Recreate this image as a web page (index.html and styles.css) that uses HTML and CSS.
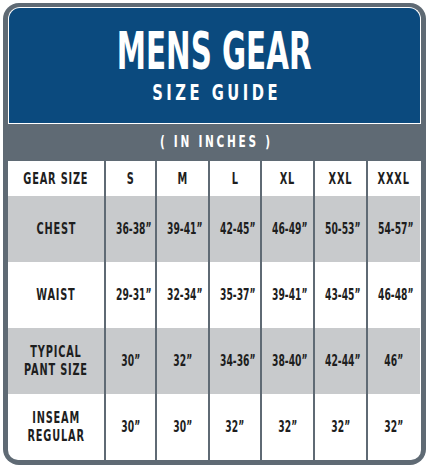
FILE: index.html
```html
<!DOCTYPE html>
<html lang="en">
<head>
    <meta charset="UTF-8">
    <meta name="viewport" content="width=device-width, initial-scale=1.0">
    <title>Mens Gear Size Guide</title>
    <link rel="stylesheet" href="styles.css">
</head>
<body>
    <div class="chart">
        <div class="banner">
            <h1><span>MENS GEAR</span></h1>
            <h2><span>SIZE GUIDE</span></h2>
        </div>

        <p class="unit"><span>( IN INCHES )</span></p>

        <div class="table-wrap">
            <table class="sizes">
                <colgroup>
                    <col class="col-label">
                    <col class="col-s">
                    <col class="col-m">
                    <col class="col-l">
                    <col class="col-m">
                    <col class="col-m">
                    <col class="col-m">
                </colgroup>
                <thead>
                    <tr>
                        <th><span>GEAR SIZE</span></th>
                        <th><span>S</span></th>
                        <th><span>M</span></th>
                        <th><span>L</span></th>
                        <th><span>XL</span></th>
                        <th><span>XXL</span></th>
                        <th><span>XXXL</span></th>
                    </tr>
                </thead>
                <tbody>
                    <tr class="shade">
                        <th><span>CHEST</span></th>
                        <td><span>36-38”</span></td>
                        <td><span>39-41”</span></td>
                        <td><span>42-45”</span></td>
                        <td><span>46-49”</span></td>
                        <td><span>50-53”</span></td>
                        <td><span>54-57”</span></td>
                    </tr>
                    <tr>
                        <th><span>WAIST</span></th>
                        <td><span>29-31”</span></td>
                        <td><span>32-34”</span></td>
                        <td><span>35-37”</span></td>
                        <td><span>39-41”</span></td>
                        <td><span>43-45”</span></td>
                        <td><span>46-48”</span></td>
                    </tr>
                    <tr class="shade">
                        <th><span>TYPICAL<br>PANT SIZE</span></th>
                        <td><span>30”</span></td>
                        <td><span>32”</span></td>
                        <td><span>34-36”</span></td>
                        <td><span>38-40”</span></td>
                        <td><span>42-44”</span></td>
                        <td><span>46”</span></td>
                    </tr>
                    <tr>
                        <th><span>INSEAM<br>REGULAR</span></th>
                        <td><span>30”</span></td>
                        <td><span>30”</span></td>
                        <td><span>32”</span></td>
                        <td><span>32”</span></td>
                        <td><span>32”</span></td>
                        <td><span>32”</span></td>
                    </tr>
                </tbody>
            </table>
        </div>
    </div>
</body>
</html>
```

FILE: styles.css
```css
body {
    margin: 0;
    padding: 0;
    background: #fff;
    font-family: 'DejaVu Sans Condensed', 'DejaVu Sans', sans-serif;
    font-weight: bold;
}
.chart {
    box-sizing: border-box;
    width: 423px;
    height: 462px;
    margin: 3px 0 0 3px;
    padding: 4px 5px 5px 5px;
    background: #5f6a74;
    border-radius: 16px;
}
.banner {
    box-sizing: border-box;
    height: 116px;
    padding-top: 19px;
    background: #0b4a7e;
    border: 1.5px solid #fff;
    border-bottom: none;
    border-radius: 12px 12px 0 0;
    color: #fff;
    text-align: center;
}
.banner span, .unit span, .sizes span {
    display: inline-block;
    white-space: nowrap;
}
.banner h1 {
    margin: 0;
    font-size: 51px;
    line-height: 50px;
}
.banner h1 span {
    transform: scaleX(0.64);
}
.banner h2 {
    margin: 4px 0 0;
    font-size: 21px;
    line-height: 24px;
}
.banner h2 span {
    letter-spacing: 4.5px;
    margin-right: -4.5px;
    transform: scaleX(0.78);
}
.unit {
    height: 38px;
    margin: 0;
    border-top: 1.5px solid #fff;
    box-sizing: border-box;
    color: #fff;
    font-size: 15px;
    line-height: 36px;
    text-align: center;
}
.unit span {
    letter-spacing: 3.5px;
    margin-right: -3.5px;
    transform: scaleX(0.78);
}
.table-wrap {
    overflow: hidden;
    border-radius: 0 0 10px 10px;
    background: #fff;
}
.sizes {
    width: 412px;
    height: 299px;
    border-collapse: collapse;
    table-layout: fixed;
    color: #1e1e1e;
    font-size: 16px;
}
.col-label { width: 97px; }
.col-s { width: 51px; }
.col-m { width: 53px; }
.col-l { width: 52px; }
.sizes th, .sizes td {
    padding: 0;
    text-align: center;
    font-weight: bold;
    line-height: 18px;
    border-left: 2px solid #5f6a74;
}
.sizes td span {
    transform: scaleX(0.64);
}
.sizes th span {
    letter-spacing: 1.2px;
    transform: scaleX(0.68);
}
.sizes tr > :first-child {
    border-left: none;
}
.sizes thead tr {
    height: 35px;
}
.sizes tbody tr {
    height: 66px;
}
.sizes tr.shade {
    background: #c8cacc;
}
```
